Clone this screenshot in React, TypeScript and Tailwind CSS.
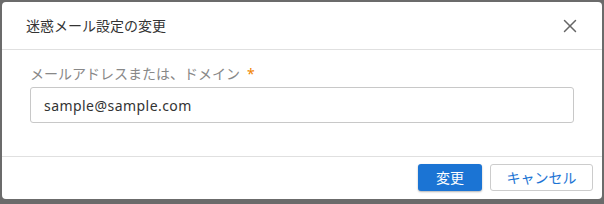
import { X } from "lucide-react";

export default function App() {
  return (
    <div className="w-[604px] h-[204px] bg-[#6b6b6b] pt-[2px] pl-[2px] font-['Noto_Sans','Noto_Sans_CJK_JP',sans-serif]">
      <div className="w-[600px] h-[197px] bg-white rounded-[4px] flex flex-col">
        {/* header */}
        <div className="h-[48px] flex items-center justify-between pl-[24px] pr-[21px] border-b border-[#e0e0e0]">
          <h1 className="text-[14px] text-[#333]">迷惑メール設定の変更</h1>
          <X className="w-[22px] h-[22px] text-[#666]" strokeWidth={1.6} />
        </div>

        {/* body */}
        <div className="h-[107px] px-[28px] pt-[14px] border-b border-[#e0e0e0]">
          <label className="block text-[14px] text-[#888] leading-[20px]">
            メールアドレスまたは、ドメイン<span className="ml-[7px] text-[#f08300]">*</span>
          </label>
          <input
            type="text"
            defaultValue="sample@sample.com"
            className="mt-[3px] w-[544px] h-[36px] rounded-[3px] border border-[#c8c8c8] px-[13px] text-[14px] tracking-[0.45px] text-[#333] outline-none"
          />
        </div>

        {/* footer */}
        <div className="flex-1 flex items-center justify-end gap-[8px] pr-[9px] pb-[1px]">
          <button className="w-[64px] h-[27px] rounded-[3px] bg-[#1b74d4] text-white text-[14px] shadow-[0_1px_2px_rgba(0,0,0,0.3)]">
            変更
          </button>
          <button className="w-[103px] h-[27px] rounded-[3px] border border-[#ccc] bg-white text-[#1b74d4] text-[14px]">
            キャンセル
          </button>
        </div>
      </div>
    </div>
  );
}
